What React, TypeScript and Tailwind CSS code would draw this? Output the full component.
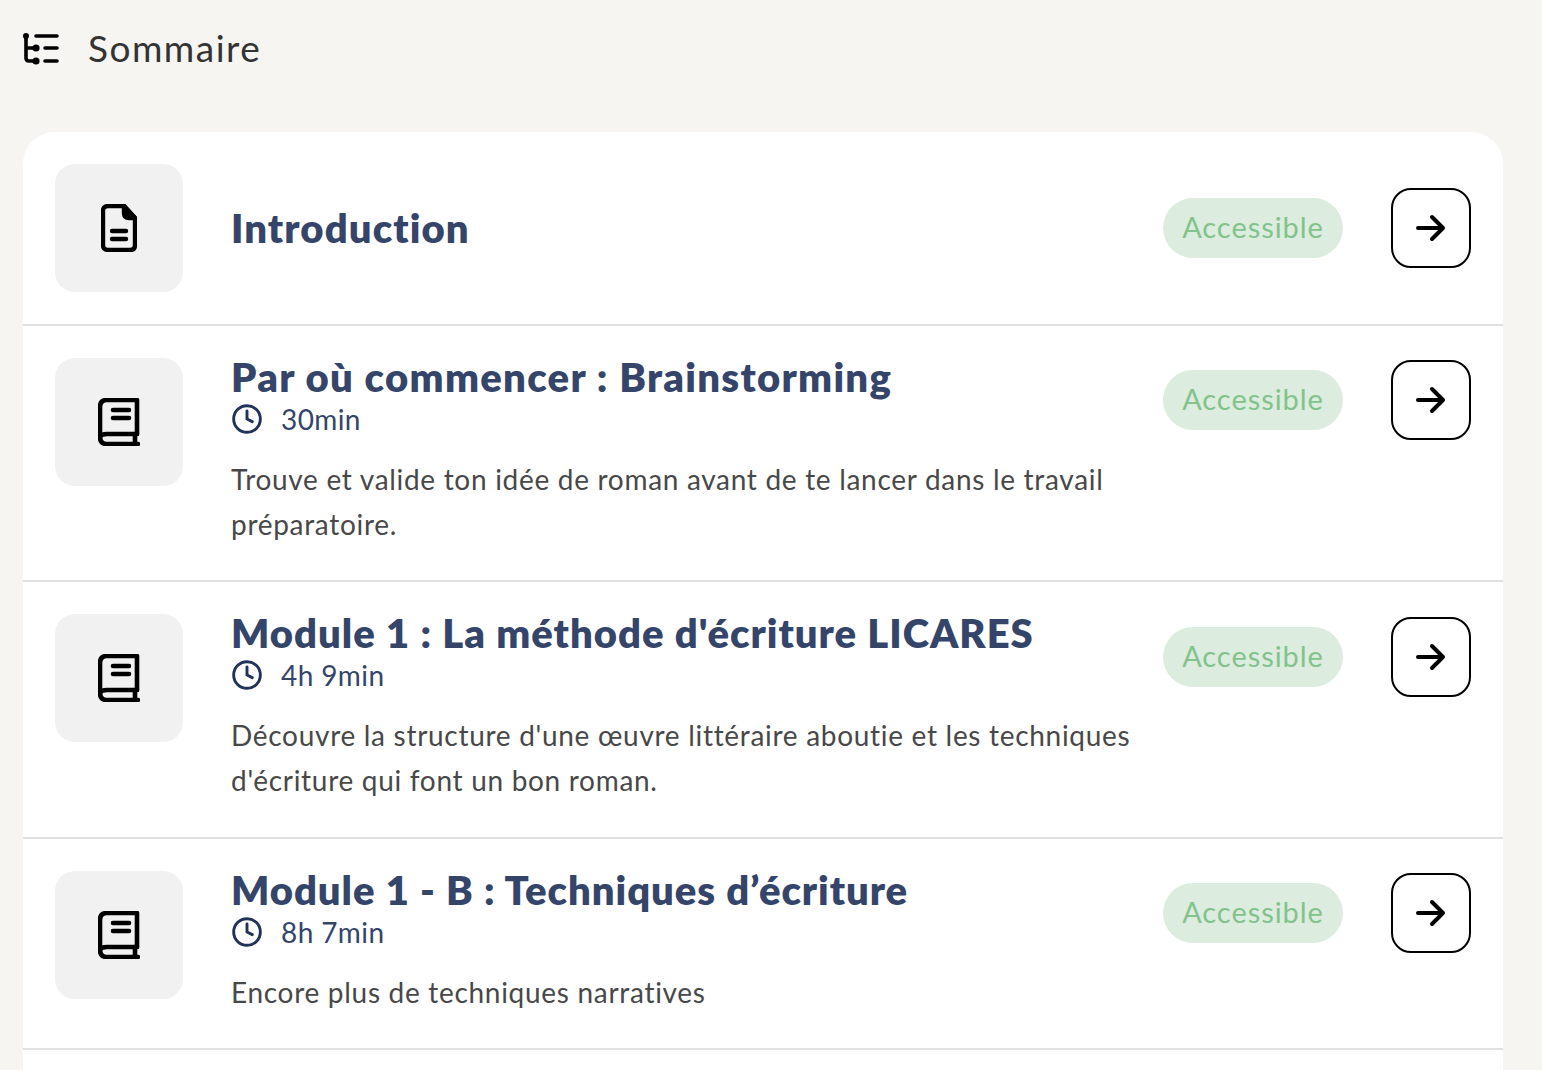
import { Clock } from "lucide-react";

const ROWS = [
  { title: "Par où commencer : Brainstorming", time: "30min", desc: "Trouve et valide ton idée de roman avant de te lancer dans le travail préparatoire.", h: "", mt: "mt-[2px]", track: "tracking-[1.3px]" },
  { title: "Module 1 : La méthode d'écriture LICARES", time: "4h 9min", desc: "Découvre la structure d'une œuvre littéraire aboutie et les techniques d'écriture qui font un bon roman.", h: "min-h-[257px]", mt: "mt-[3px]", track: "tracking-[1px]" },
  { title: "Module 1 - B : Techniques d’écriture", time: "8h 7min", desc: "Encore plus de techniques narratives", h: "", mt: "mt-[2px]", track: "tracking-[0.95px]" },
];

function TreeIcon() {
  return (
    <svg width="38" height="32" viewBox="0 0 38 32" fill="none" stroke="#000" strokeWidth="3.6" strokeLinecap="round">
      <path d="M3 3v22q0 3 3 3h6M3 15h9M13 3h21M22 15h12M22 28h12" />
      <circle cx="3" cy="3" r="3" fill="#000" stroke="none" />
      <circle cx="13" cy="15" r="3.6" fill="#000" stroke="none" />
      <circle cx="13" cy="28" r="3.6" fill="#000" stroke="none" />
    </svg>
  );
}

function DocIcon() {
  return (
    <svg width="36" height="48" viewBox="0 0 36 48" fill="none" stroke="#000" strokeWidth="4.4" strokeLinecap="round" strokeLinejoin="round">
      <path d="M7 2h16l11 12v27q0 5-5 5H7q-5 0-5-5V7q0-5 5-5Z" />
      <path d="M23 2v7q0 5 5 5h6L23 2Z" fill="#000" />
      <path d="M11 27h14M11 35h14" />
    </svg>
  );
}

function BookIcon() {
  return (
    <svg width="42" height="48" viewBox="0 0 42 48" fill="none" stroke="#000" strokeWidth="4.6" strokeLinecap="round" strokeLinejoin="round">
      <path d="M39 36V2H9q-7 0-7 7v30q0 7 7 7h31" />
      <path d="M2 40q0-4 7-4h30" />
      <path d="M37 36v10" />
      <path d="M15 12h16M15 20h16" />
    </svg>
  );
}

function ArrowIcon() {
  return (
    <svg width="32" height="28" viewBox="0 0 32 28" fill="none" stroke="#000" strokeWidth="4" strokeLinecap="round" strokeLinejoin="round">
      <path d="M3 14h25M17 3l11 11-11 11" />
    </svg>
  );
}

function Actions() {
  return (
    <div className="flex items-center gap-12 shrink-0">
      <span className="flex h-[60px] w-[180px] items-center justify-center rounded-full bg-[#dcecdf] pb-[2px] text-[29px] tracking-[0.95px] text-[#82c38c]">
        Accessible
      </span>
      <button className="flex h-20 w-20 items-center justify-center rounded-[20px] border-2 border-black">
        <ArrowIcon />
      </button>
    </div>
  );
}

function Thumb({ children }: { children: React.ReactNode }) {
  return (
    <div className="flex h-32 w-32 shrink-0 items-center justify-center rounded-[20px] bg-[#f1f1f1]">
      {children}
    </div>
  );
}

export default function App() {
  return (
    <div className="h-[1070px] overflow-hidden bg-[#f6f5f2] px-[23px] pr-[39px] font-['Lato','Open_Sans',sans-serif] [font-variant-ligatures:none]">
      <div className="flex h-[132px] items-start gap-[27px] pt-[33px]">
        <TreeIcon />
        <h1 className="text-[37px] leading-[30px] tracking-[1.5px] text-[#333]">Sommaire</h1>
      </div>
      <div className="h-[938px] rounded-t-[32px] bg-white">
        <div className="flex h-[194px] items-center gap-12 border-b-2 border-[#e1e1e1] px-8">
          <Thumb><DocIcon /></Thumb>
          <h2 className="flex-1 text-[40px] font-extrabold tracking-[1.1px] text-[#35456a]">Introduction</h2>
          <Actions />
        </div>
        {ROWS.map((r) => (
          <div key={r.title} className={`flex gap-12 border-b-2 border-[#e1e1e1] p-8 ${r.h}`}>
            <Thumb><BookIcon /></Thumb>
            <div className="-mt-[1px] flex-1">
              <h2 className={`mb-[2px] text-[40px] leading-[40px] font-extrabold text-[#35456a] ${r.track}`}>{r.title}</h2>
              <div className="flex h-[40px] items-center gap-[18px] text-[28px] tracking-[0.4px] text-[#35456a]">
                <Clock size={32} strokeWidth={2.2} color="#22335a" />
                <span>{r.time}</span>
              </div>
              <p className="mt-[18px] mb-[1px] text-[28px] leading-[45px] tracking-[0.7px] text-[#484848]">{r.desc}</p>
            </div>
            <div className={`-ml-12 ${r.mt}`}><Actions /></div>
          </div>
        ))}
      </div>
    </div>
  );
}
